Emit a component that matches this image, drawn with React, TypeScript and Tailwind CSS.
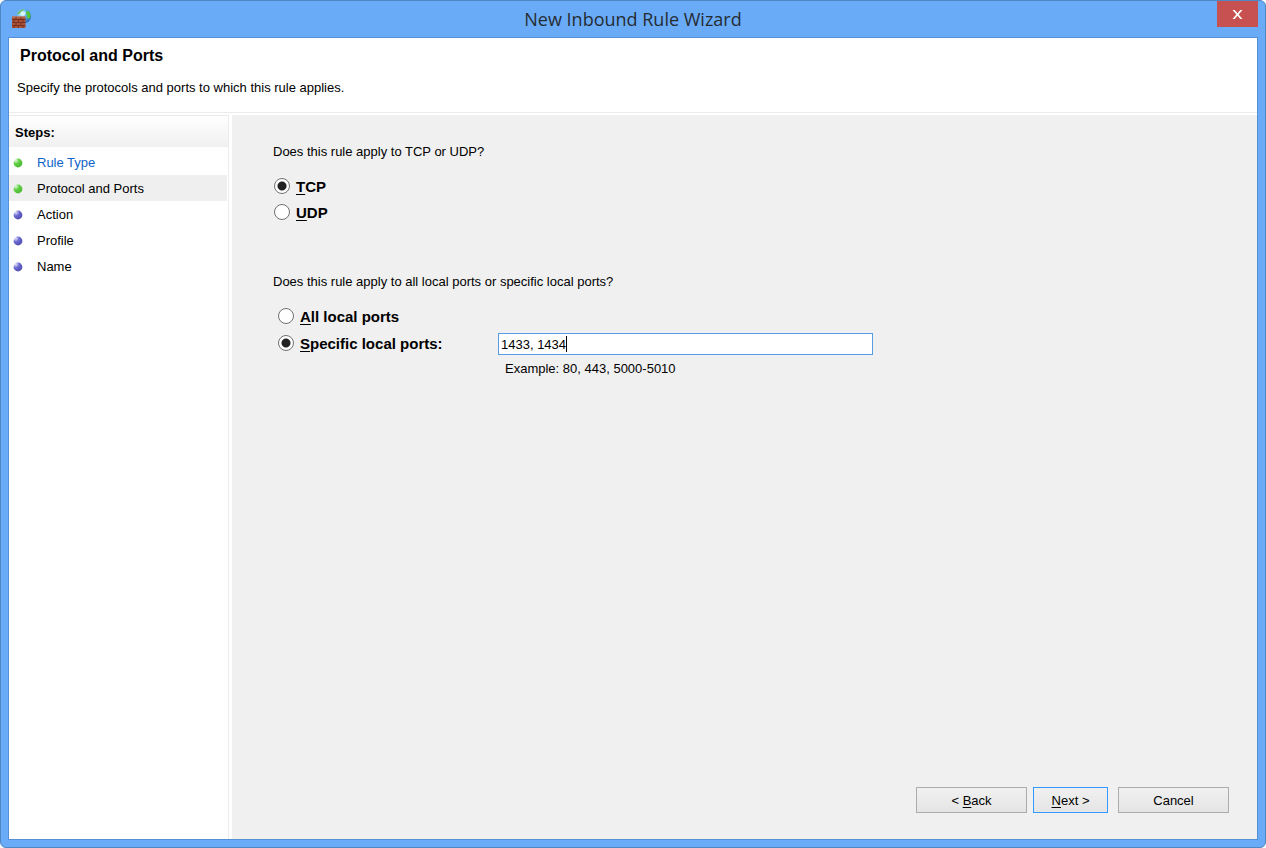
import { useState } from "react";

const steps = [
  { name: "Rule Type", done: true },
  { name: "Protocol and Ports", done: true },
  { name: "Action", done: false },
  { name: "Profile", done: false },
  { name: "Name", done: false },
];

const currentStep = "Protocol and Ports";

export default function App() {
  return (
    <div className="flex min-h-screen bg-white font-['Liberation_Sans',Arial,sans-serif] text-[13px] leading-4 text-black">
      <div className="flex flex-1 flex-col rounded-md border border-[#4f86c4] bg-[#6aabf7] px-[7px] pb-[7px]">
        <TitleBar />
        <div className="flex flex-1 flex-col border border-[#5590d3] bg-white">
          <header className="border-b border-[#ececec] pb-4">
            <h1 className="px-[11px] pt-2 text-base leading-5 font-bold">
              Protocol and Ports
            </h1>
            <p className="px-2 pt-[14px]">
              Specify the protocols and ports to which this rule applies.
            </p>
          </header>
          <div className="flex flex-1 gap-[3px] pt-0.5">
            <StepList />
            <PortsForm />
          </div>
        </div>
      </div>
    </div>
  );
}

function TitleBar() {
  return (
    <div className="flex h-9 justify-between">
      <div className="flex flex-1 items-center">
        <FirewallIcon className="ml-1 h-5 w-5" />
      </div>
      <h2 className="self-center font-['Open_Sans','Noto_Sans',sans-serif] text-lg leading-6 text-[#262c33]">
        New Inbound Rule Wizard
      </h2>
      <div className="flex flex-1 items-start justify-end">
        <button
          type="button"
          aria-label="Close"
          className="flex h-[26px] w-[41px] items-center justify-center bg-[#c75050]"
        >
          <svg viewBox="0 0 11 9" className="h-[9px] w-[11px]" aria-hidden>
            <path d="M0.500 0H2.700L5.500 3.200 8.300 0h2.200L6.700 4.500 10.500 9H8.300L5.500 5.800 2.700 9H0.500L4.300 4.500Z" fill="#fff" />
          </svg>
        </button>
      </div>
    </div>
  );
}

function StepList() {
  return (
    <nav className="w-[220px] shrink-0 border-r border-[#ececec]">
      <h3 className="h-8 border-t border-[#ececec] bg-linear-to-b from-white to-[#f0f0f0] pt-[9px] pl-1.5 font-bold">
        Steps:
      </h3>
      <ul className="mr-px pt-0.5">
        {steps.map((step) => (
          <li
            key={step.name}
            className={
              step.name === currentStep
                ? "flex h-[26px] items-center bg-[#efefef] pt-0.5"
                : "flex h-[26px] items-center pt-0.5"
            }
          >
            <StepDot done={step.done} />
            {step.name === "Rule Type" ? (
              <a href="#rule-type" className="text-[#1164c8]">
                {step.name}
              </a>
            ) : (
              <span>{step.name}</span>
            )}
          </li>
        ))}
      </ul>
    </nav>
  );
}

function StepDot({ done }: { done: boolean }) {
  const id = done ? "dot-done" : "dot-todo";

  return (
    <svg viewBox="0 0 10 10" className="mr-[14px] ml-1 h-[10px] w-[10px]" aria-hidden>
      <defs>
        <radialGradient id={id} cx="0.25" cy="0.2" r="0.8">
          <stop offset="0" stopColor={done ? "#e4fadc" : "#e4e6fa"} />
          <stop offset="0.5" stopColor={done ? "#5fcf42" : "#6a68cf"} />
          <stop offset="1" stopColor={done ? "#4fbb38" : "#5451b4"} />
        </radialGradient>
      </defs>
      <circle cx="5" cy="5" r="4.400" fill={`url(#${id})`} />
    </svg>
  );
}

function PortsForm() {
  const [protocol, setProtocol] = useState("TCP");
  const [scope, setScope] = useState("specific");
  const [ports, setPorts] = useState("1433, 1434");

  return (
    <form className="flex flex-1 flex-col justify-between bg-[#f0f0f0] pt-[29px] pb-[26px] pl-[41px]">
      <div>
        <fieldset>
          <legend>Does this rule apply to TCP or UDP?</legend>
          <div className="mt-[13px] pl-px">
            <Radio name="protocol" mark="T" rest="CP" checked={protocol === "TCP"} onSelect={() => setProtocol("TCP")} />
            <Radio name="protocol" mark="U" rest="DP" checked={protocol === "UDP"} onSelect={() => setProtocol("UDP")} />
          </div>
        </fieldset>

        <fieldset className="mt-[49px]">
          <legend>Does this rule apply to all local ports or specific local ports?</legend>
          <div className="mt-[13px] pl-[5px]">
            <Radio name="scope" mark="A" rest="ll local ports" checked={scope === "all"} onSelect={() => setScope("all")} />
            <div className="flex h-7 items-center">
              <div className="w-[220px]">
                <Radio name="scope" mark="S" rest="pecific local ports:" checked={scope === "specific"} onSelect={() => setScope("specific")} />
              </div>
              <div className="relative mt-0.5 w-[375px]">
                <input
                  type="text"
                  aria-label="Specific local ports"
                  value={ports}
                  onChange={(e) => setPorts(e.target.value)}
                  className="block h-[22px] w-full border border-[#569de5] bg-white px-0.5 outline-none"
                />
                <span className="absolute top-[3px] left-[68px] h-4 w-px bg-black" />
              </div>
            </div>
            <p className="mt-1 pl-[227px]">Example: 80, 443, 5000-5010</p>
          </div>
        </fieldset>
      </div>

      <div className="flex justify-end pr-7">
        <button type="button" className="h-[26px] w-[111px] border border-[#acacac] bg-linear-to-b from-[#f0f0f0] to-[#e5e5e5] pt-0.5">
          &lt; <u className="underline-offset-2">B</u>ack
        </button>
        <button type="button" className="ml-1.5 h-[26px] w-[75px] border border-[#3399ff] bg-linear-to-b from-[#f0f0f0] to-[#e5e5e5] pt-0.5">
          <u className="underline-offset-2">N</u>ext &gt;
        </button>
        <button type="button" className="ml-[10px] h-[26px] w-[111px] border border-[#acacac] bg-linear-to-b from-[#f0f0f0] to-[#e5e5e5] pt-0.5">
          Cancel
        </button>
      </div>
    </form>
  );
}

type RadioProps = {
  name: string;
  mark: string;
  rest: string;
  checked: boolean;
  onSelect: () => void;
};

function Radio({ name, mark, rest, checked, onSelect }: RadioProps) {
  return (
    <label className="flex h-[26px] items-center gap-1.5 text-[15px] font-bold">
      <input
        type="radio"
        name={name}
        checked={checked}
        onChange={onSelect}
        className="h-4 w-4 appearance-none rounded-full border border-[#707070] bg-white checked:bg-[radial-gradient(circle,#222_4px,#fff_5px)]"
      />
      <span className="pt-0.5">
        <u className="underline-offset-2">{mark}</u>
        {rest}
      </span>
    </label>
  );
}

// brick wall in front of a globe
function FirewallIcon({ className }: { className?: string }) {
  return (
    <svg viewBox="0 0 20 20" className={className} aria-hidden>
      <defs>
        <radialGradient id="globe" cx="0.35" cy="0.3" r="0.8">
          <stop offset="0" stopColor="#e8fbff" />
          <stop offset="0.45" stopColor="#58b4ee" />
          <stop offset="1" stopColor="#1c55ab" />
        </radialGradient>
      </defs>
      <circle cx="11.800" cy="7.200" r="7.200" fill="url(#globe)" />
      <path d="M5.500 4C7 1.500 10 0 12.500 .2l-1.500 1.500-2 .8-1 2-2.800 1Z" fill="#6cbd62" />
      <path d="M14.500 2l2.300.2 1.700 3-.2 3.300L16.500 10l-1.800-1.800.3-2-1-1.700Z" fill="#56c43a" />
      <path d="M8.500 4.500l3-2 2 .5-.5 3-3 1.500Z" fill="#dcfaff" opacity="0.8" />
      <path d="M0 7.500h13.500V19H0Z" fill="#ac5238" />
      <path d="M0 7.500h13.500v1H0Z" fill="#c47c63" />
      <path
        d="M0 10.500h13.500M0 13.500h13.500M0 16.500h13.500M4 8v2.500M9 8v2.500M2 10.500v3M6.500 10.500v3M11 10.500v3M4 13.500v3M9 13.500v3M2 16.500V19M6.500 16.500V19M11 16.500V19"
        stroke="#662819"
        strokeWidth="0.7"
      />
    </svg>
  );
}
